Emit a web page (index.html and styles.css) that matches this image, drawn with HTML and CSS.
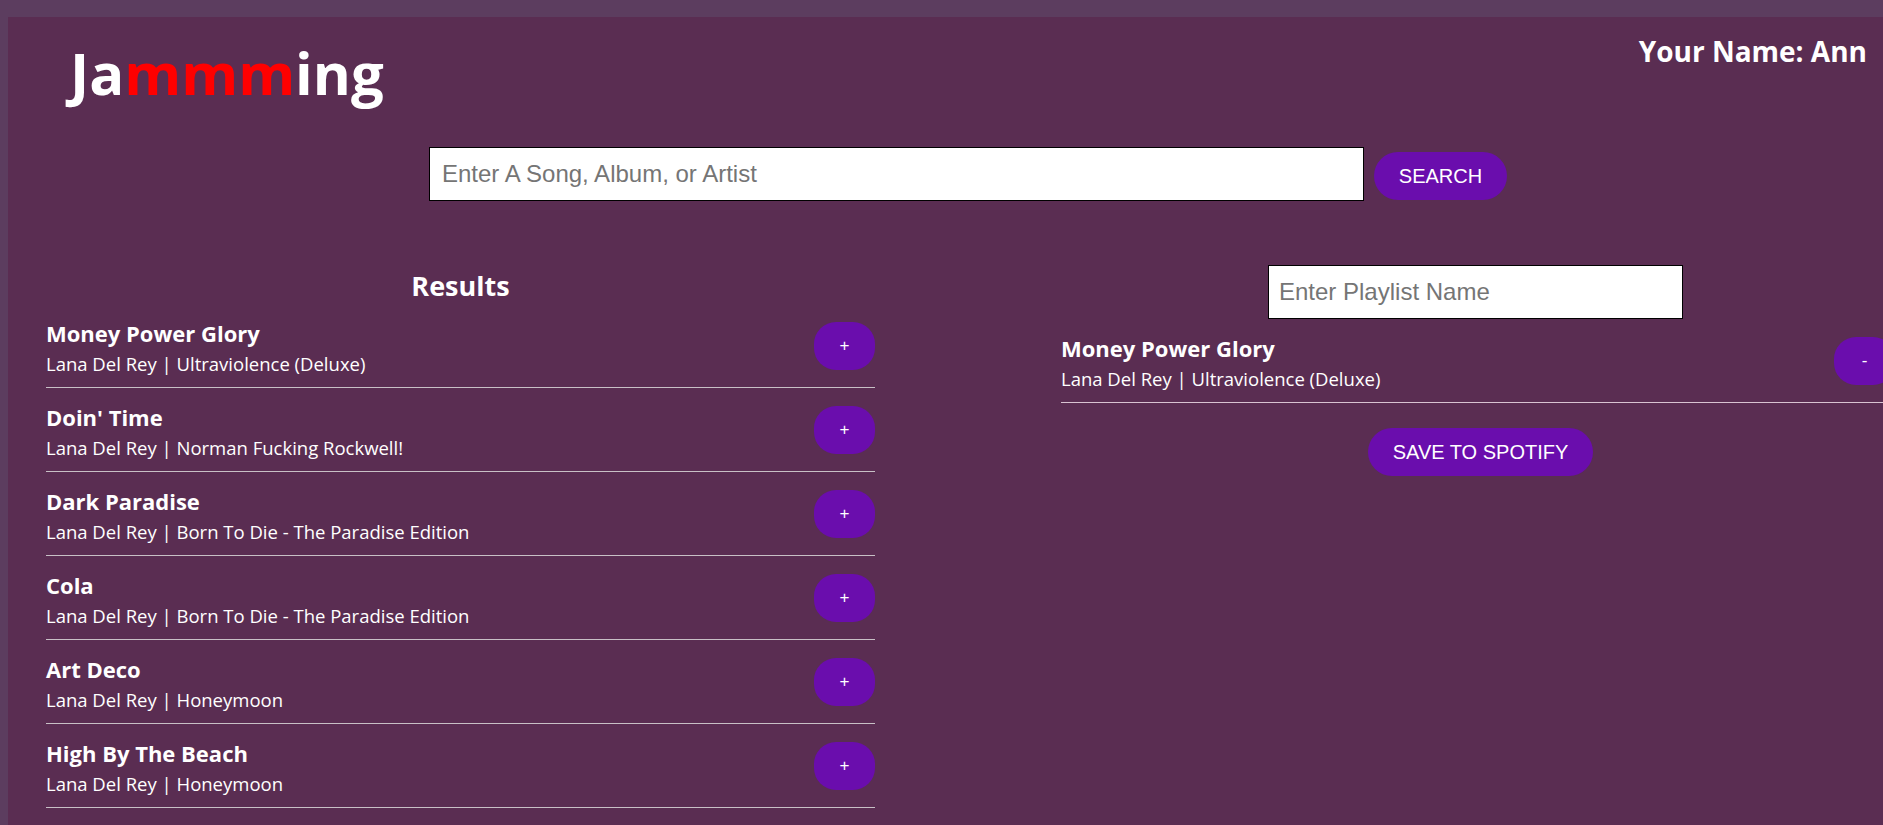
FILE: index.html
```html
<!DOCTYPE html>
<html lang="en">
<head>
<meta charset="utf-8">
<title>Jammming</title>
<link rel="stylesheet" href="styles.css">
</head>
<body>
<div class="app">
  <header class="header">
    <h1 class="logo">Ja<span class="logo-accent">mmm</span>ing</h1>
    <div class="user">Your Name: Ann</div>
  </header>

  <div class="search-bar">
    <input class="search-input" type="text" placeholder="Enter A Song, Album, or Artist">
    <button class="btn search-btn">SEARCH</button>
  </div>

  <main class="panels">
    <section class="results">
      <h2 class="results-title">Results</h2>
      <div class="track">
        <div class="track-info">
          <div class="track-name">Money Power Glory</div>
          <div class="track-meta">Lana Del Rey | Ultraviolence (Deluxe)</div>
        </div>
        <button class="btn track-btn">+</button>
      </div>
      <div class="track">
        <div class="track-info">
          <div class="track-name">Doin' Time</div>
          <div class="track-meta">Lana Del Rey | Norman Fucking Rockwell!</div>
        </div>
        <button class="btn track-btn">+</button>
      </div>
      <div class="track">
        <div class="track-info">
          <div class="track-name">Dark Paradise</div>
          <div class="track-meta">Lana Del Rey | Born To Die - The Paradise Edition</div>
        </div>
        <button class="btn track-btn">+</button>
      </div>
      <div class="track">
        <div class="track-info">
          <div class="track-name">Cola</div>
          <div class="track-meta">Lana Del Rey | Born To Die - The Paradise Edition</div>
        </div>
        <button class="btn track-btn">+</button>
      </div>
      <div class="track">
        <div class="track-info">
          <div class="track-name">Art Deco</div>
          <div class="track-meta">Lana Del Rey | Honeymoon</div>
        </div>
        <button class="btn track-btn">+</button>
      </div>
      <div class="track">
        <div class="track-info">
          <div class="track-name">High By The Beach</div>
          <div class="track-meta">Lana Del Rey | Honeymoon</div>
        </div>
        <button class="btn track-btn">+</button>
      </div>
    </section>

    <section class="playlist">
      <input class="playlist-input" type="text" placeholder="Enter Playlist Name">
      <div class="track playlist-track">
        <div class="track-info">
          <div class="track-name">Money Power Glory</div>
          <div class="track-meta">Lana Del Rey | Ultraviolence (Deluxe)</div>
        </div>
        <button class="btn track-btn">-</button>
      </div>
      <button class="btn save-btn">SAVE TO SPOTIFY</button>
    </section>
  </main>
</div>
</body>
</html>
```

FILE: styles.css
```css
html, body {
  margin: 0;
  padding: 0;
  overflow: hidden;
  height: 100%;
}

body {
  background: #5c3d5f;
  font-family: "Open Sans", "Noto Sans", sans-serif;
  color: #ffffff;
}

.app {
  margin: 17px 0 0 8px;
  width: 1900px;
  min-height: 900px;
  background: #5a2d52;
}

.header {
  display: flex;
  justify-content: space-between;
  align-items: flex-start;
  width: 1875px;
}

.logo {
  margin: 20px 0 0 62px;
  font-size: 58px;
  line-height: 72px;
  font-weight: 700;
  color: #ffffff;
}

.logo-accent {
  color: #ff0000;
}

.user {
  margin: 16px 16px 0 0;
  font-size: 28px;
  line-height: 36px;
  font-weight: 700;
}

.search-bar {
  display: flex;
  align-items: flex-start;
  margin: 38px 0 0 421px;
}

.search-input {
  box-sizing: border-box;
  width: 935px;
  height: 54px;
  border: 1px solid #000;
  padding: 0 12px;
  font-family: "Liberation Sans", Arial, sans-serif;
  font-size: 24px;
  background: #fff;
  outline: none;
}

.search-input::placeholder,
.playlist-input::placeholder {
  color: #757575;
}

.btn {
  background: #6a0dad;
  color: #fff;
  border: none;
  font-family: "Liberation Sans", Arial, sans-serif;
  padding: 0;
  cursor: pointer;
}

.search-btn {
  width: 133px;
  height: 48px;
  margin: 5px 0 0 10px;
  border-radius: 24px;
  font-size: 20px;
}

.panels {
  display: flex;
  align-items: flex-start;
  gap: 186px;
  margin-top: 64px;
  padding-left: 38px;
}

.results {
  width: 829px;
}

.results-title {
  margin: 5px 0 2px;
  text-align: center;
  font-size: 27px;
  line-height: 32px;
  font-weight: 700;
}

.track {
  display: flex;
  align-items: center;
  justify-content: space-between;
  height: 83px;
  border-bottom: 1px solid #c8c0c6;
}

.track-info {
  padding-top: 5px;
}

.track-name {
  font-size: 22px;
  line-height: 28px;
  font-weight: 700;
}

.track-meta {
  margin-top: 3px;
  font-size: 18.5px;
  line-height: 28px;
}

.track-btn {
  width: 61px;
  height: 48px;
  border-radius: 22px;
  font-size: 17px;
  flex-shrink: 0;
}

.playlist {
  width: 834px;
  display: flex;
  flex-direction: column;
  align-items: center;
}

.playlist-input {
  box-sizing: border-box;
  width: 415px;
  height: 54px;
  margin-right: 5px;
  border: 1px solid #000;
  padding: 0 10px;
  font-family: "Liberation Sans", Arial, sans-serif;
  font-size: 24px;
  background: #fff;
  outline: none;
}

.playlist-track {
  align-self: stretch;
  border-bottom-color: #d9c3d2;
}

.save-btn {
  width: 225px;
  height: 48px;
  margin: 25px 0 0 5px;
  border-radius: 24px;
  font-size: 20px;
}
```
